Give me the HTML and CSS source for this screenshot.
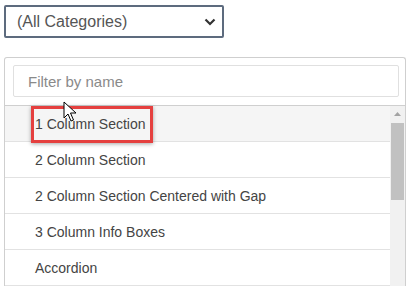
FILE: index.html
```html
<!DOCTYPE html>
<html>
<head>
<meta charset="utf-8">
<link rel="stylesheet" href="styles.css">
</head>
<body>
<div class="page">
  <div class="select">
    <span class="select-text">(All Categories)</span>
    <svg class="chev" width="12" height="8" viewBox="0 0 12 8"><path d="M1.5 1.5 L6 6 L10.5 1.5" fill="none" stroke="#333" stroke-width="2.2"/></svg>
  </div>
  <div class="panel">
    <div class="filter-wrap">
      <div class="filter">Filter by name</div>
    </div>
    <div class="list-area">
      <ul class="list">
        <li class="row hover">1 Column Section</li>
        <li class="row">2 Column Section</li>
        <li class="row">2 Column Section Centered with Gap</li>
        <li class="row">3 Column Info Boxes</li>
        <li class="row">Accordion</li>
      </ul>
      <div class="scrollbar">
        <svg class="up" width="15" height="17" viewBox="0 0 15 17"><path d="M4 10 L7.5 6 L11 10 Z" fill="#a3a3a3"/></svg>
        <div class="thumb"></div>
      </div>
    </div>
  </div>
  <div class="highlight"></div>
  <svg class="cursor" width="14" height="22" viewBox="0 0 14 22"><path d="M1 1 L1 17 L5 13 L8 20 L10.5 19 L7.5 12 L13 12 Z" fill="#fff" stroke="#000" stroke-width="1"/></svg>
</div>
</body>
</html>
```
FILE: styles.css
```css
html, body {
  margin: 0;
  padding: 0;
  background: #fff;
  font-family: "Liberation Sans", Arial, sans-serif;
  overflow: hidden;
}
.page {
  position: relative;
  padding: 5px 0 0 4px;
}
.select {
  box-sizing: border-box;
  width: 220px;
  height: 33px;
  border: 2px solid #5d6b7e;
  border-radius: 2px;
  display: flex;
  align-items: center;
  justify-content: space-between;
  padding: 0 6px 0 11px;
}
.select-text {
  font-size: 16px;
  color: #555;
}
.chev {
  display: block;
}
.panel {
  box-sizing: border-box;
  margin-top: 19px;
  width: 402px;
  border: 1px solid #cfcfcf;
  border-bottom: none;
  border-radius: 3px 3px 0 0;
}
.filter-wrap {
  padding: 7px 6px 8px 8px;
}
.filter {
  box-sizing: border-box;
  height: 32px;
  border: 1px solid #e0e0e0;
  border-radius: 2px;
  font-size: 15px;
  color: #8a8a8a;
  display: flex;
  align-items: center;
  padding-left: 14px;
}
.list-area {
  display: flex;
  border-top: 1px solid #cfcfcf;
}
.list {
  list-style: none;
  margin: 0;
  padding: 0;
  flex: 1;
}
.row {
  height: 35px;
  border-bottom: 1px solid #e2e2e2;
  display: flex;
  align-items: center;
  padding-left: 30px;
  font-size: 14px;
  color: #444;
}
.row.hover {
  background: #f5f5f5;
}
.scrollbar {
  width: 15px;
  background: #f1f1f1;
  display: flex;
  flex-direction: column;
  align-items: center;
}
.up {
  display: block;
}
.thumb {
  width: 13px;
  height: 77px;
  background: #c1c1c1;
}
.highlight {
  position: absolute;
  left: 31px;
  top: 106px;
  width: 116px;
  height: 31px;
  border: 3px solid #e5403f;
  box-shadow: 0 1px 4px rgba(0,0,0,0.35);
  pointer-events: none;
}
.cursor {
  position: absolute;
  left: 63px;
  top: 101px;
}
```
